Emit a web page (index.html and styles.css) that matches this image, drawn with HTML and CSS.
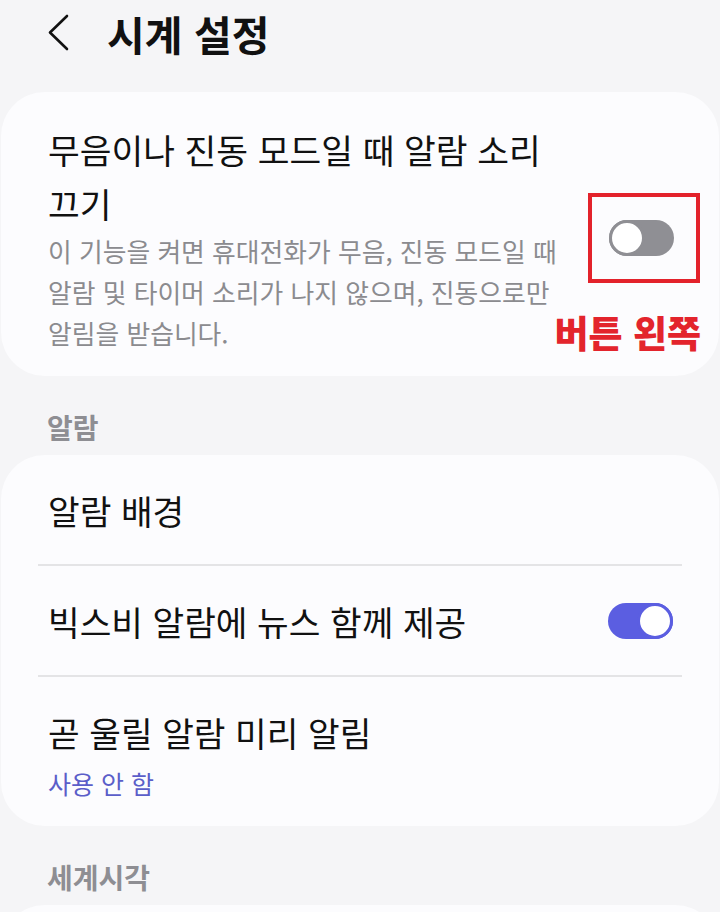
FILE: index.html
```html
<!DOCTYPE html>
<html lang="ko">
<head>
    <meta charset="UTF-8">
    <meta name="viewport" content="width=device-width, initial-scale=1.0">
    <title>시계 설정</title>
    <link rel="stylesheet" href="styles.css">
</head>
<body>
    <header class="topbar">
        <svg class="back" width="28" height="40" viewBox="0 0 28 40">
            <polyline points="22,3 5,19.5 22,36" fill="none" stroke="#111" stroke-width="2.6" stroke-linecap="round" stroke-linejoin="round"/>
        </svg>
        <h1>시계 설정</h1>
    </header>

    <div class="card card-main">
        <div class="main-text">
            <div class="main-title">무음이나 진동 모드일 때 알람 소리 끄기</div>
            <div class="main-desc">이 기능을 켜면 휴대전화가 무음, 진동 모드일 때 알람 및 타이머 소리가 나지 않으며, 진동으로만 알림을 받습니다.</div>
        </div>
        <div class="mark-box">
            <span class="toggle"></span>
            <span class="mark-note">버튼 왼쪽</span>
        </div>
    </div>

    <div class="section-label">알람</div>
    <div class="card">
        <div class="row">
            <span class="row-title">알람 배경</span>
        </div>
        <div class="divider"></div>
        <div class="row">
            <span class="row-title">빅스비 알람에 뉴스 함께 제공</span>
            <span class="toggle on"></span>
        </div>
        <div class="divider"></div>
        <div class="row row-sub">
            <span class="row-title">곧 울릴 알람 미리 알림</span>
            <span class="row-value">사용 안 함</span>
        </div>
    </div>

    <div class="section-label">세계시각</div>
    <div class="card card-tail"></div>
</body>
</html>
```

FILE: styles.css
```css
body {
    margin: 0;
    background-color: #f5f5f7;
    font-family: "Noto Sans CJK KR", "Noto Sans", sans-serif;
    color: #111;
}

.topbar {
    height: 66px;
    padding: 0 0 4px 45px;
    display: flex;
    align-items: center;
}

.back {
    display: block;
}

.topbar h1 {
    margin: 0 0 0 34px;
    font-size: 41px;
    font-weight: 700;
    line-height: 1;
}

.card {
    background-color: #fcfcfe;
    margin: 22px 1px 0;
    border-radius: 44px;
}

.card-main {
    display: flex;
    align-items: center;
    padding: 30px 0 23px 47px;
}

.main-text {
    width: 530px;
    word-break: keep-all;
}

.main-title {
    font-size: 34.5px;
    line-height: 54px;
}

.main-desc {
    font-size: 25.8px;
    line-height: 41px;
    color: #8b8b8f;
}

/* red outline around the switch with its caption */
.mark-box {
    position: relative;
    width: 87px;
    height: 82px;
    margin-left: 10px;
    padding-left: 17px;
    border: 4px solid #e3222b;
    display: flex;
    align-items: center;
}

.mark-note {
    position: absolute;
    top: 117px;
    right: -5px;
    white-space: nowrap;
    font-size: 37px;
    font-weight: 900;
    line-height: 1;
    color: #e3242c;
}

.toggle {
    position: relative;
    display: inline-block;
    width: 65px;
    height: 36px;
    border-radius: 18px;
    background-color: #8f8f94;
    flex-shrink: 0;
}

.toggle::after {
    content: "";
    position: absolute;
    top: 0;
    left: 0;
    width: 30px;
    height: 30px;
    border: 3px solid #8f8f94;
    border-radius: 50%;
    background-color: #fff;
}

.toggle.on {
    background-color: #5b5ee1;
}

.toggle.on::after {
    left: auto;
    right: 0;
    border-color: #5b5ee1;
}

.section-label {
    padding: 23px 47px 0;
    line-height: 56px;
    font-size: 28px;
    font-weight: 700;
    color: #8e8e93;
}

.section-label + .card {
    margin-top: 0;
}

.row {
    min-height: 109px;
    padding: 0 46px 0 47px;
    display: flex;
    align-items: center;
    justify-content: space-between;
}

.row-title {
    font-size: 34.4px;
    line-height: 44px;
}

.row-sub {
    flex-direction: column;
    align-items: flex-start;
    justify-content: flex-start;
    padding-top: 33px;
    padding-bottom: 25px;
    min-height: 0;
}

.row-value {
    margin-top: 11px;
    font-size: 25px;
    line-height: 36px;
    color: #5b5ec9;
}

.divider {
    height: 2px;
    margin: 0 37px;
    background-color: #e4e4e6;
}

.card-tail {
    height: 120px;
}
```
